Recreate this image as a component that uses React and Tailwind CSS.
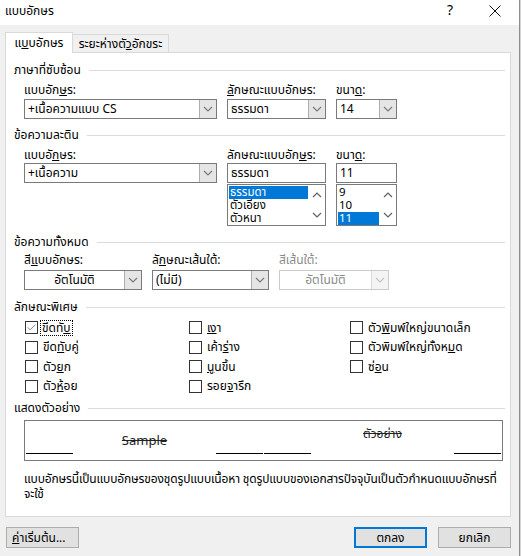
import { Check } from "lucide-react";

const FONT = { fontFamily: '"Noto Sans Thai", Tahoma, "Noto Sans", "DejaVu Sans", sans-serif' };

function Chevron({ dir = "down", className = "" }) {
  const d = dir === "down" ? "M1 1 L5 5 L9 1" : "M1 5 L5 1 L9 5";
  return (
    <svg width="10" height="6" viewBox="0 0 10 6" className={className}>
      <path d={d} fill="none" stroke="currentColor" strokeWidth="1.2" />
    </svg>
  );
}

function GroupHeader({ children, className = "" }) {
  return (
    <div className={`flex items-center h-[16px] ${className}`}>
      <span className="text-black">{children}</span>
      <div className="flex-1 h-px bg-[#dcdcdc] ml-[8px] mr-[5px]" />
    </div>
  );
}

function Combo({ value, width, center = false, disabled = false }) {
  return (
    <div
      className={`flex h-[20px] border ${disabled ? "border-[#cccccc] text-[#8a8a8a]" : "border-[#7a7a7a] text-black"} bg-white ${width}`}
    >
      <div className={`flex-1 flex items-center px-[3px] ${center ? "justify-center" : ""}`}>{value}</div>
      <div
        className={`w-[17px] flex items-center justify-center border-l ${disabled ? "border-[#d9d9d9] bg-[#f4f4f4] text-[#c4c4c4]" : "border-[#adadad] bg-[#e5e5e5] text-[#7a7a7a]"}`}
      >
        <Chevron />
      </div>
    </div>
  );
}

function ListBox({ items, selected, width }) {
  return (
    <div className={`flex h-[42px] mt-[1px] border border-[#7a7a7a] bg-white ${width}`}>
      <div className="flex-1 flex flex-col pt-[1px] pl-[1px]">
        {items.map((it) => (
          <div
            key={it}
            className={`h-[13.3px] leading-[13px] text-[11.5px] px-[1px] ${it === selected ? "bg-[#0078d7] text-white" : "text-black"}`}
          >
            {it}
          </div>
        ))}
      </div>
      <div className="w-[17px] flex flex-col items-center justify-between py-[7px] text-[#606060]">
        <Chevron dir="up" />
        <Chevron />
      </div>
    </div>
  );
}

function CheckItem({ label, checked = false, focus = false }) {
  return (
    <div className="flex items-center h-[19.5px]">
      <div className="w-[13px] h-[13px] border border-[#333333] bg-white flex items-center justify-center">
        {checked && <Check className="w-[11px] h-[11px] text-[#505050]" strokeWidth={1.5} />}
      </div>
      <span className={`ml-[3px] px-[1px] leading-[14px] ${focus ? "outline outline-1 outline-dotted outline-black" : "border border-transparent"}`}>
        {label}
      </span>
    </div>
  );
}

export default function App() {
  return (
    <div className="w-[521px] h-[556px] bg-[#f0f0f0] flex text-[12px] overflow-hidden" style={FONT}>
      <div className="w-[519px] flex flex-col">
        {/* Title bar */}
        <div className="h-[25px] bg-white flex items-center text-black">
          <span className="ml-[5px] mt-[-4px]">แบบอักษร</span>
          <span className="ml-auto mr-[36px] text-[14px] mt-[-4px]">?</span>
          <svg width="12" height="12" viewBox="0 0 12 12" className="mr-[18px] mt-[-4px]">
            <path d="M0.5 0.5 L11.5 11.5 M11.5 0.5 L0.5 11.5" stroke="#111" strokeWidth="1" />
          </svg>
        </div>

        {/* Tabs */}
        <div className="h-[27px] flex items-end pl-[5px]">
          <div className="h-[21px] w-[68px] bg-white border border-b-0 border-[#d9d9d9] flex items-center justify-center -mb-px relative z-10">
            แ<u>บ</u>บอักษร
          </div>
          <div className="h-[18px] w-[96px] bg-[#f0f0f0] border border-l-0 border-b-0 border-[#d9d9d9] flex items-center justify-center">
            ระยะห่างตั<u>ว</u>อักขระ
          </div>
        </div>

        {/* Panel */}
        <div className="ml-[5px] w-[506px] h-[465px] bg-white border border-[#d9d9d9] pl-[8px] flex flex-col">
          <GroupHeader className="mt-[9px]">ภาษาที่ซับซ้อน</GroupHeader>
          <div className="ml-[10px] flex mt-[4px]">
            <div className="w-[203px]">
              <div className="h-[16px] flex items-center">แบบอัก<u>ษ</u>ร:</div>
              <div className="mt-[1px]"><Combo value="+เนื้อความแบบ CS" width="w-[193px]" /></div>
            </div>
            <div className="w-[109px]">
              <div className="h-[16px] flex items-center"><u>ลั</u>กษณะแบบอักษร:</div>
              <div className="mt-[1px]"><Combo value="ธรรมดา" width="w-[99px]" /></div>
            </div>
            <div>
              <div className="h-[16px] flex items-center">ขนา<u>ด</u>:</div>
              <div className="mt-[1px]"><Combo value="14" width="w-[61px]" /></div>
            </div>
          </div>

          <GroupHeader className="mt-[8px]">ข้อความละติน</GroupHeader>
          <div className="ml-[10px] flex mt-[4px]">
            <div className="w-[203px]">
              <div className="h-[16px] flex items-center">แบบอั<u>ก</u>ษร:</div>
              <Combo value="+เนื้อความ" width="w-[193px]" />
            </div>
            <div className="w-[109px]">
              <div className="h-[16px] flex items-center">ลักษณะแบบอัก<u>ษ</u>ร:</div>
              <div className="h-[20px] w-[99px] border border-[#7a7a7a] flex items-center px-[3px]">ธรรมดา</div>
              <ListBox items={["ธรรมดา", "ตัวเอียง", "ตัวหนา"]} selected="ธรรมดา" width="w-[99px]" />
            </div>
            <div>
              <div className="h-[16px] flex items-center">ขนา<u>ด</u>:</div>
              <div className="h-[20px] w-[61px] border border-[#7a7a7a] flex items-center px-[3px]">11</div>
              <ListBox items={["9", "10", "11"]} selected="11" width="w-[61px]" />
            </div>
          </div>

          <GroupHeader className="mt-[8px]">ข้อความทั้งหมด</GroupHeader>
          <div className="ml-[10px] flex mt-[2px]">
            <div className="w-[128px]">
              <div className="h-[16px] flex items-center">สี<u>แ</u>บบอักษร:</div>
              <div className="mt-[2px]"><Combo value="อัตโนมัติ" center width="w-[118px]" /></div>
            </div>
            <div className="w-[127px]">
              <div className="h-[16px] flex items-center">ลั<u>ก</u>ษณะเส้นใต้:</div>
              <div className="mt-[2px]"><Combo value="(ไม่มี)" width="w-[117px]" /></div>
            </div>
            <div>
              <div className="h-[16px] flex items-center text-[#8a8a8a]">สีเส้นใต้:</div>
              <div className="mt-[2px]"><Combo value="อัตโนมัติ" center disabled width="w-[110px]" /></div>
            </div>
          </div>

          <GroupHeader className="mt-[9px]">ลักษณะพิเศษ</GroupHeader>
          <div className="ml-[11px] flex mt-[3px]">
            <div className="w-[164px] flex flex-col">
              <CheckItem label={<>ขีดทั<u>บ</u></>} checked focus />
              <CheckItem label={<>ขีด<u>ทั</u>บคู่</>} />
              <CheckItem label={<>ตัว<u>ย</u>ก</>} />
              <CheckItem label={<>ตัว<u>ห้</u>อย</>} />
            </div>
            <div className="w-[161px] flex flex-col">
              <CheckItem label={<><u>เง</u>า</>} />
              <CheckItem label={<>เค้า<u>ร่</u>าง</>} />
              <CheckItem label={<><u>นู</u>นขึ้น</>} />
              <CheckItem label={<>รอย<u>จ</u>ารึก</>} />
            </div>
            <div className="flex flex-col">
              <CheckItem label={<>ตัว<u>พิ</u>มพ์ใหญ่ขนาดเล็ก</>} />
              <CheckItem label={<>ตัวพิมพ์ใหญ่ทั้งห<u>ม</u>ด</>} />
              <CheckItem label={<>ซ่<u>อ</u>น</>} />
            </div>
          </div>

          <GroupHeader className="mt-[4px]">แสดงตัวอย่าง</GroupHeader>
          <div className="ml-[10px] mt-[4px] w-[479px] h-[41px] border border-[#7a7a7a] flex items-end pb-[6px] pl-[1px]">
            <div className="w-[47px] h-px bg-black" />
            <div className="w-[143px] flex justify-center self-center mt-[8px] text-[13px] line-through text-[#222]">Sample</div>
            <div className="w-[47px] h-px bg-black" />
            <div className="w-px" />
            <div className="w-[47px] h-px bg-black" />
            <div className="w-[143px] flex justify-center self-start mt-[4px] line-through text-[#222]">ตัวอย่าง</div>
            <div className="w-[47px] h-px bg-black" />
          </div>
          <div className="ml-[10px] mt-[11px] leading-[15px] w-[490px] whitespace-nowrap tracking-[-0.15px]">
            แบบอักษรนี้เป็นแบบอักษรของชุดรูปแบบเนื้อหา ชุดรูปแบบของเอกสารปัจจุบันเป็นตัวกำหนดแบบอักษรที่
            <br />
            จะใช้
          </div>
        </div>

        {/* Buttons */}
        <div className="flex mt-[10px] h-[21px]">
          <button className="ml-[6px] w-[73px] h-[21px] border border-[#adadad] bg-[#e1e1e1] flex items-center pl-[5px]">
            <u>ค่</u>าเริ่มต้น...
          </button>
          <button className="ml-auto w-[73px] h-[21px] border-2 border-[#0078d7] bg-[#e1e1e1] flex items-center justify-center">
            ตกลง
          </button>
          <button className="ml-[11px] mr-[8px] w-[73px] h-[21px] border border-[#adadad] bg-[#e1e1e1] flex items-center justify-center">
            ยกเลิก
          </button>
        </div>
      </div>
      <div className="w-[1px] bg-[#8d8d8d]" />
      <div className="w-[1px] bg-[#d4d4d4]" />
    </div>
  );
}
